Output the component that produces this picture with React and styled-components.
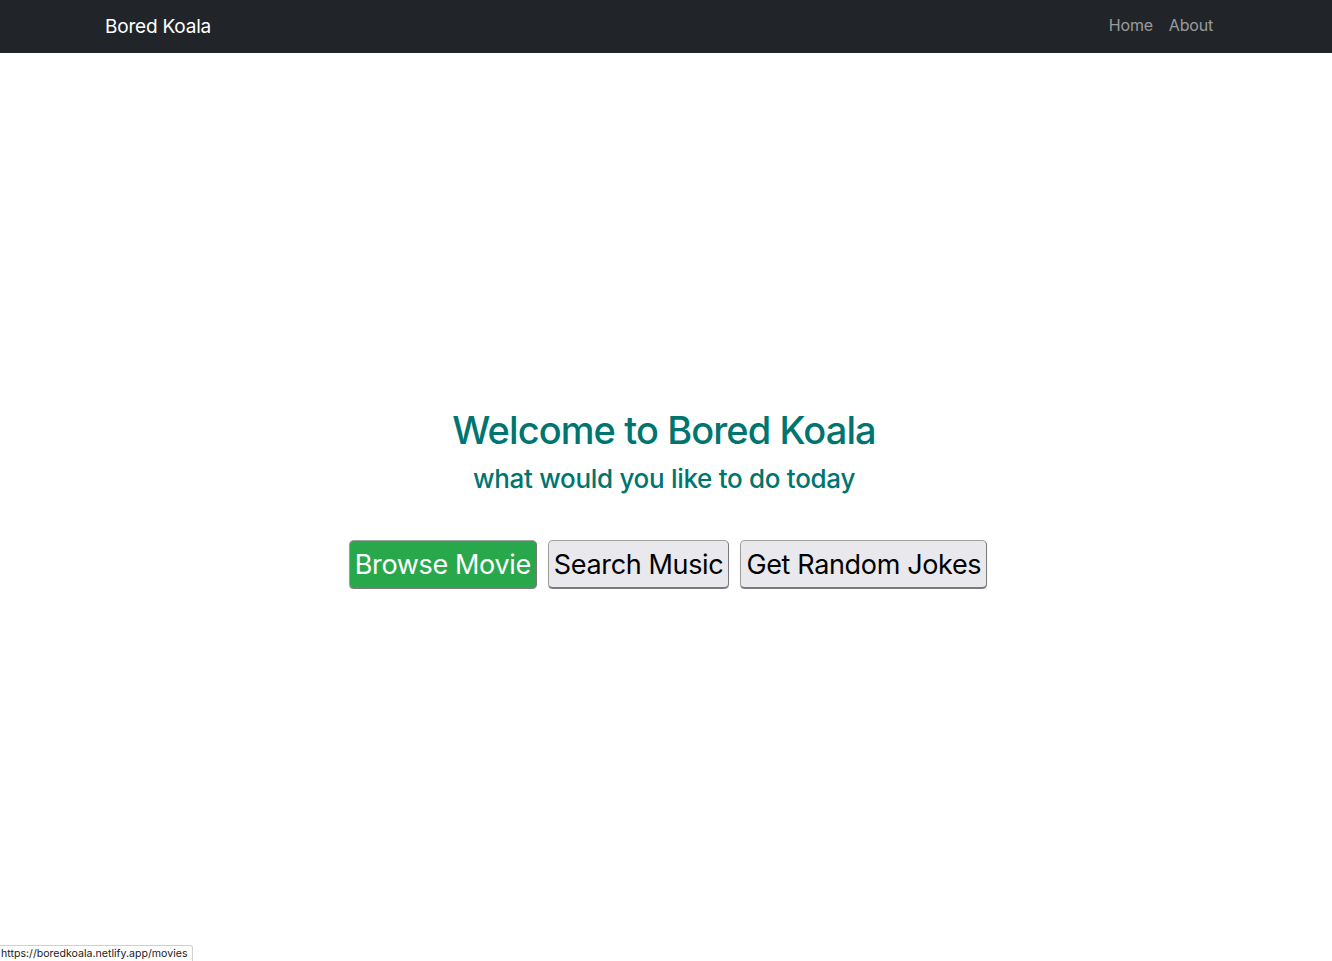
import React from "react";
import styled, { createGlobalStyle } from "styled-components";

const GlobalStyle = createGlobalStyle`
  body {
    margin: 0;
    font-family: Inter, "Noto Sans", sans-serif;
    background: #fff;
  }
`;

function App() {
  return (
    <>
      <GlobalStyle />
      <Navbar>
        <NavInner>
          <Brand href="#">Bored Koala</Brand>
          <NavLinks>
            <NavLink href="#">Home</NavLink>
            <NavLink href="#">About</NavLink>
          </NavLinks>
        </NavInner>
      </Navbar>
      <Hero>
        <Title>Welcome to Bored Koala</Title>
        <Subtitle>what would you like to do today</Subtitle>
        <Actions>
          <ActionButton primary>Browse Movie</ActionButton>
          <ActionButton>Search Music</ActionButton>
          <ActionButton>Get Random Jokes</ActionButton>
        </Actions>
      </Hero>
      <StatusUrl>https://boredkoala.netlify.app/movies</StatusUrl>
    </>
  );
}

const Navbar = styled.nav`
  background: #212529;
  height: 53px;
  display: flex;
  align-items: center;
`;

const NavInner = styled.div`
  width: 1140px;
  margin: 0 auto;
  padding: 0 23px 0 9px;
  box-sizing: border-box;
  display: flex;
  justify-content: space-between;
  align-items: center;
`;

const Brand = styled.a`
  color: #fff;
  font-size: 19px;
  text-decoration: none;
  letter-spacing: -0.2px;
`;

const NavLinks = styled.div`
  display: flex;
  gap: 16px;
  margin-top: -3px;
`;

const NavLink = styled.a`
  color: rgba(255, 255, 255, 0.55);
  font-size: 16px;
  text-decoration: none;
  letter-spacing: -0.2px;
`;

const Hero = styled.main`
  display: flex;
  flex-direction: column;
  align-items: center;
  padding-top: 352px;
  padding-right: 4px;
`;

const Title = styled.h1`
  margin: 0;
  color: #00756f;
  font-size: 38px;
  font-weight: 500;
  letter-spacing: -0.9px;
  line-height: 50px;
`;

const Subtitle = styled.h2`
  margin: 6px 0 0;
  color: #00756f;
  font-size: 26px;
  font-weight: 500;
  letter-spacing: -0.3px;
  line-height: 36px;
`;

const Actions = styled.div`
  display: flex;
  gap: 11px;
  margin-top: 43px;
  margin-left: 8px;
`;

const ActionButton = styled.button`
  font-family: Inter, "Noto Sans", sans-serif;
  font-size: 27px;
  letter-spacing: -0.35px;
  height: 49px;
  padding: 0 5px;
  border-radius: 5px;
  border: 1.5px solid #a0a0a0;
  border-right-color: #7a7a7a;
  border-bottom: 2px solid #7a7a7a;
  box-shadow: 0 1px 1px rgba(0, 0, 0, 0.2);
  background: ${(p) => (p.primary ? "#28a74b" : "#e9e9ed")};
  color: ${(p) => (p.primary ? "#fff" : "#000")};
`;

const StatusUrl = styled.div`
  position: fixed;
  left: -2px;
  bottom: 0;
  font-size: 10.6px;
  color: #222;
  background: #fff;
  border: 1px solid #d0d0d0;
  border-bottom: none;
  border-radius: 0 3px 0 0;
  padding: 1px 4px 1px 2px;
  font-family: Inter, "Noto Sans", sans-serif;
`;

export default App;
